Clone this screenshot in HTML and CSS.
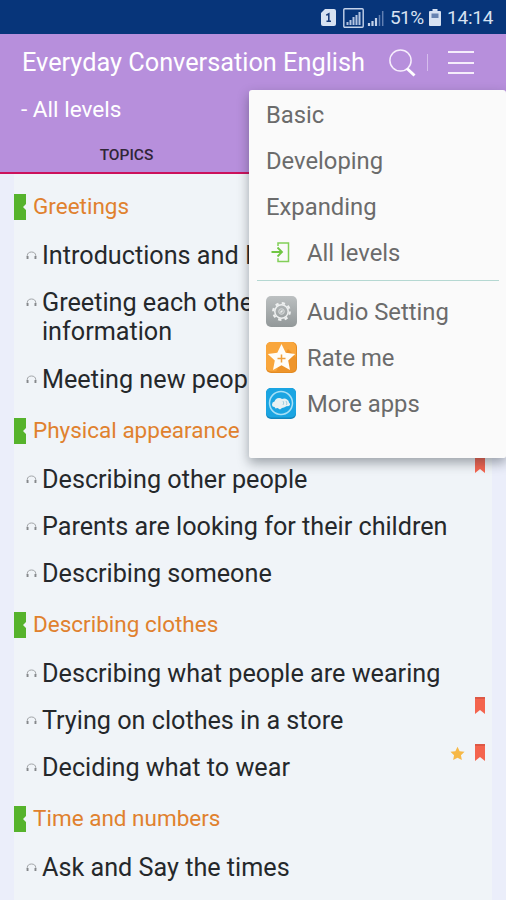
FILE: index.html
```html
<!DOCTYPE html>
<html lang="en">
<head>
    <meta charset="UTF-8">
    <meta name="viewport" content="width=device-width, initial-scale=1.0">
    <title>Everyday Conversation English</title>
    <link rel="stylesheet" href="styles.css">
</head>
<body>
    <!-- shared icons -->
    <svg class="sprite" width="0" height="0">
        <symbol id="tag" viewBox="0 0 12 26">
            <path d="M0 0h12v10l-3 3 3 3v10H0z" fill="#56b32c"/>
        </symbol>
        <symbol id="phones" viewBox="0 0 11 9">
            <path d="M1.3 6V4.6C1.3 2.3 3 1 5.5 1s4.2 1.3 4.2 3.6V6" fill="none" stroke="#a2a5a8" stroke-width="1"/>
            <path d="M.6 4.9h1.9v3H.6zM8.5 4.9h1.9v3H8.5z" fill="#85888b"/>
        </symbol>
        <symbol id="ribbon" viewBox="0 0 10 17">
            <path d="M0 0h10v17l-5-4-5 4z" fill="#f4644e"/>
            <path d="M0 0h10v2H0z" fill="#dd5846"/>
        </symbol>
        <symbol id="star" viewBox="0 0 24 24">
            <path d="M12 1l3.4 7.2 7.9 1-5.8 5.4 1.5 7.9-7-3.9-7 3.9 1.5-7.9L.7 9.2l7.9-1z"/>
        </symbol>
    </svg>

    <div class="status-bar">
        <svg class="sim" width="15" height="17" viewBox="0 0 15 17">
            <path d="M4 0h9q2 0 2 2v13q0 2-2 2H2q-2 0-2-2V4z" fill="#d7e2f2"/>
            <path d="M5.3 6.2L7.8 4.8V12M5.5 12.2h4.5" fill="none" stroke="#173a78" stroke-width="1.6"/>
        </svg>
        <svg class="signal-box" width="21" height="20" viewBox="0 0 21 20">
            <rect x=".8" y=".8" width="19.4" height="18.4" rx="1" fill="none" stroke="#c5d3ea" stroke-width="1.4"/>
            <path d="M4.5 14v3M7.5 12v5M10.5 9v8M13.5 7v10M16.5 4v13" stroke="#b4c5e2" stroke-width="2"/>
        </svg>
        <svg class="signal" width="17" height="17" viewBox="0 0 17 17">
            <path d="M2 14v3M5.5 12v5M9 9v8" stroke="#c5d3ea" stroke-width="2.2"/>
            <path d="M12.5 6v11M15.7 2v15" stroke="#617fb2" stroke-width="1.5"/>
        </svg>
        <span class="percent">51%</span>
        <svg class="battery" width="12" height="17" viewBox="0 0 12 17">
            <path d="M3.5 0h5v2H11q1 0 1 1v13q0 1-1 1H1q-1 0-1-1V3q0-1 1-1h2.5z" fill="#d7e2f2"/>
            <path d="M2.5 4.5h7V9h-7z" fill="#6783b0"/>
        </svg>
        <span class="clock">14:14</span>
    </div>

    <div class="header">
        <div class="title-row">
            <h1>Everyday Conversation English</h1>
            <svg class="search" width="28" height="28" viewBox="0 0 28 28">
                <circle cx="12.5" cy="11.5" r="10.6" fill="none" stroke="#f6edfc" stroke-width="1.5"/>
                <path d="M19 19.5l7.5 7" stroke="#fff" stroke-width="3"/>
            </svg>
            <span class="separator"></span>
            <div class="menu-button"><span></span><span></span><span></span></div>
        </div>
        <p class="level">- All levels</p>
        <div class="tabs"><span>TOPICS</span></div>
    </div>

    <div class="topics">
        <h2><svg class="tag"><use href="#tag"/></svg><span>Greetings</span></h2>
        <div class="item"><svg class="phones"><use href="#phones"/></svg><p>Introductions and I</p></div>
        <div class="item two-lines"><svg class="phones"><use href="#phones"/></svg><p>Greeting each other<br>information</p></div>
        <div class="item"><svg class="phones"><use href="#phones"/></svg><p>Meeting new people</p></div>

        <h2><svg class="tag"><use href="#tag"/></svg><span>Physical appearance</span></h2>
        <div class="item"><svg class="phones"><use href="#phones"/></svg><p>Describing other people</p>
            <div class="marks"><svg class="ribbon"><use href="#ribbon"/></svg></div>
        </div>
        <div class="item"><svg class="phones"><use href="#phones"/></svg><p>Parents are looking for their children</p></div>
        <div class="item"><svg class="phones"><use href="#phones"/></svg><p>Describing someone</p></div>

        <h2><svg class="tag"><use href="#tag"/></svg><span>Describing clothes</span></h2>
        <div class="item"><svg class="phones"><use href="#phones"/></svg><p>Describing what people are wearing</p></div>
        <div class="item"><svg class="phones"><use href="#phones"/></svg><p>Trying on clothes in a store</p>
            <div class="marks"><svg class="ribbon"><use href="#ribbon"/></svg></div>
        </div>
        <div class="item"><svg class="phones"><use href="#phones"/></svg><p>Deciding what to wear</p>
            <div class="marks">
                <svg class="star"><use href="#star"/></svg>
                <svg class="ribbon"><use href="#ribbon"/></svg>
            </div>
        </div>

        <h2><svg class="tag"><use href="#tag"/></svg><span>Time and numbers</span></h2>
        <div class="item"><svg class="phones"><use href="#phones"/></svg><p>Ask and Say the times</p></div>
    </div>

    <div class="menu">
        <div class="menu-item">Basic</div>
        <div class="menu-item">Developing</div>
        <div class="menu-item">Expanding</div>
        <div class="menu-item">
            <svg width="31" height="31" viewBox="0 0 31 31">
                <path d="M12 8V5h10.5v18.5H12v-3.2" fill="none" stroke="#82cf58" stroke-width="1.5"/>
                <path d="M5.5 14H16M11.5 9.5L16 14l-4.5 4.5" fill="none" stroke="#70c643" stroke-width="1.8"/>
            </svg>
            All levels
        </div>
        <div class="divider"></div>
        <div class="menu-item app">
            <svg width="31" height="31" viewBox="0 0 31 31">
                <defs>
                    <linearGradient id="gray" x2="0" y2="1"><stop stop-color="#bcc0c1"/><stop offset="1" stop-color="#929899"/></linearGradient>
                </defs>
                <rect width="31" height="31" rx="5" fill="url(#gray)"/>
                <circle cx="15.5" cy="15.5" r="8.3" fill="none" stroke="#eef0f0" stroke-width="2.2" stroke-dasharray="3.26 3.26"/>
                <circle cx="15.5" cy="15.5" r="6.7" fill="none" stroke="#eef0f0" stroke-width="1.5"/>
                <circle cx="15.5" cy="15.5" r="2.8" fill="#b5babb" stroke="#d9dcdc" stroke-width="1"/>
                <path d="M14.5 16.5l2-2" stroke="#eef0f0" stroke-width="1.5"/>
            </svg>
            <span>Audio Setting</span>
        </div>
        <div class="menu-item app">
            <svg width="31" height="31" viewBox="0 0 31 31">
                <rect width="31" height="31" rx="5" fill="#e48b22"/>
                <rect width="30" height="29.5" rx="5" fill="#f9a63c"/>
                <path d="M22 7l8 8v10q0 4.500-4.500 4.500H10z" fill="#ee942a"/>
                <path d="M15.5 2l4.200 8.800 9.500 1.200-7 6.500 1.800 9.500-8.500-4.700L7 28l1.800-9.500-7-6.500 9.500-1.200z" fill="#fffdf8"/>
                <path d="M15.5 12.500v8M11.500 16.500h8" stroke="#f0a03b" stroke-width="1.5"/>
            </svg>
            <span>Rate me</span>
        </div>
        <div class="menu-item app">
            <svg width="31" height="31" viewBox="0 0 31 31">
                <rect width="30" height="31" rx="5" fill="#1486bd"/>
                <rect width="30" height="29.5" rx="5" fill="#1ba5e2"/>
                <circle cx="15" cy="15" r="11.5" fill="none" stroke="#a8e0f7" stroke-width="1.5"/>
                <path d="M6 16.500q0-2.500 2.500-3 1-3.500 4.500-3.500 2 0 3 1 3-1 5 .5 2 1 2 3 1.500 1 1 2.500-1 1.500-3 1l-3 1.500-2 .5-2 1.500-2.500-1.500-2 .5-1-1.500Q6 19 6 16.500z" fill="#e9f1f2"/>
                <path d="M17 13q1.500 2 0 4M20 13q1.500 2 .5 4" fill="none" stroke="#8fc4d9" stroke-width=".8"/>
            </svg>
            <span>More apps</span>
        </div>
    </div>
</body>
</html>
```
FILE: styles.css
```css
* {
    box-sizing: border-box;
}
body {
    margin: 0;
    height: 900px;
    overflow: hidden;
    position: relative;
    font-family: Roboto, "Liberation Sans", sans-serif;
    background-color: #ebeefa;
}
h1, h2, p {
    margin: 0;
    font-weight: 400;
}
svg {
    display: block;
    flex-shrink: 0;
}
.sprite {
    position: absolute;
}

/* status bar */
.status-bar {
    height: 34px;
    padding: 1px 13px 0 0;
    display: flex;
    align-items: center;
    justify-content: flex-end;
    background-color: #07357a;
    color: #d7e2f2;
    font-size: 19px;
}
.signal-box {
    margin-left: 7px;
}
.signal {
    margin-left: 3px;
}
.percent {
    margin-left: 6px;
    width: 34px;
    letter-spacing: -0.6px;
}
.battery {
    margin-left: 5px;
}
.clock {
    margin-left: 6px;
    width: 46px;
    letter-spacing: -0.2px;
    white-space: nowrap;
}

/* header */
.header {
    height: 140px;
    background-color: #b78fdc;
    border-bottom: 2px solid #cc125c;
    color: #fff;
}
.title-row {
    display: flex;
    align-items: center;
    height: 57px;
    padding-left: 22px;
}
.title-row h1 {
    width: 366px;
    font-size: 25.3px;
    white-space: nowrap;
}
.separator {
    width: 1px;
    height: 17px;
    margin: 0 20px 0 11px;
    background-color: #d6bded;
}
.menu-button {
    width: 26px;
    height: 23px;
    display: flex;
    flex-direction: column;
    justify-content: space-between;
}
.menu-button span {
    height: 2px;
    background-color: #f5edfb;
}
.level {
    height: 38px;
    padding-left: 21px;
    line-height: 38px;
    font-size: 22.6px;
}
.tabs {
    display: flex;
    height: 43px;
    line-height: 52px;
    color: #302537;
    font-size: 15.5px;
    font-weight: 500;
}
.tabs span {
    width: 253px;
    text-align: center;
}

/* topic list */
.topics {
    margin: 0 14px;
    padding-top: 6px;
    background-color: #f0f4f8;
    height: 726px;
}
.topics h2 {
    height: 53px;
    display: flex;
    align-items: center;
    font-size: 22.5px;
    color: #e0812e;
}
.topics h2 span {
    padding-bottom: 2px;
}
.tag {
    width: 12px;
    height: 26px;
    margin-right: 7px;
}
.item {
    height: 47px;
    padding: 8px 7px 0 12px;
    display: flex;
    color: #25282b;
    font-size: 25.2px;
    line-height: 29px;
}
.two-lines {
    height: 77px;
}
.item p {
    white-space: nowrap;
}
.phones {
    width: 11px;
    height: 9px;
    margin: 10px 5px 0 0;
}
.marks {
    margin: -9px 0 0 auto;
    display: flex;
    gap: 10px;
}
.ribbon {
    width: 10px;
    height: 17px;
}
.star {
    width: 15px;
    height: 15px;
    margin-top: 2px;
    fill: #f6b847;
}

/* popup menu */
.menu {
    position: absolute;
    top: 90px;
    left: 249px;
    width: 257px;
    height: 368px;
    padding-top: 2px;
    background-color: #fafafa;
    border-radius: 3px 3px 2px 2px;
    box-shadow: 0 5px 12px rgba(30, 40, 50, 0.4);
}
.menu-item {
    height: 46px;
    padding-left: 17px;
    display: flex;
    align-items: center;
    gap: 10px;
    color: #6b6b6b;
    font-size: 23.8px;
    white-space: nowrap;
}
.app span {
    padding-top: 2px;
}
.divider {
    height: 1px;
    margin: 4px 7px 7px 8px;
    background-color: #b5d8d2;
}
```
